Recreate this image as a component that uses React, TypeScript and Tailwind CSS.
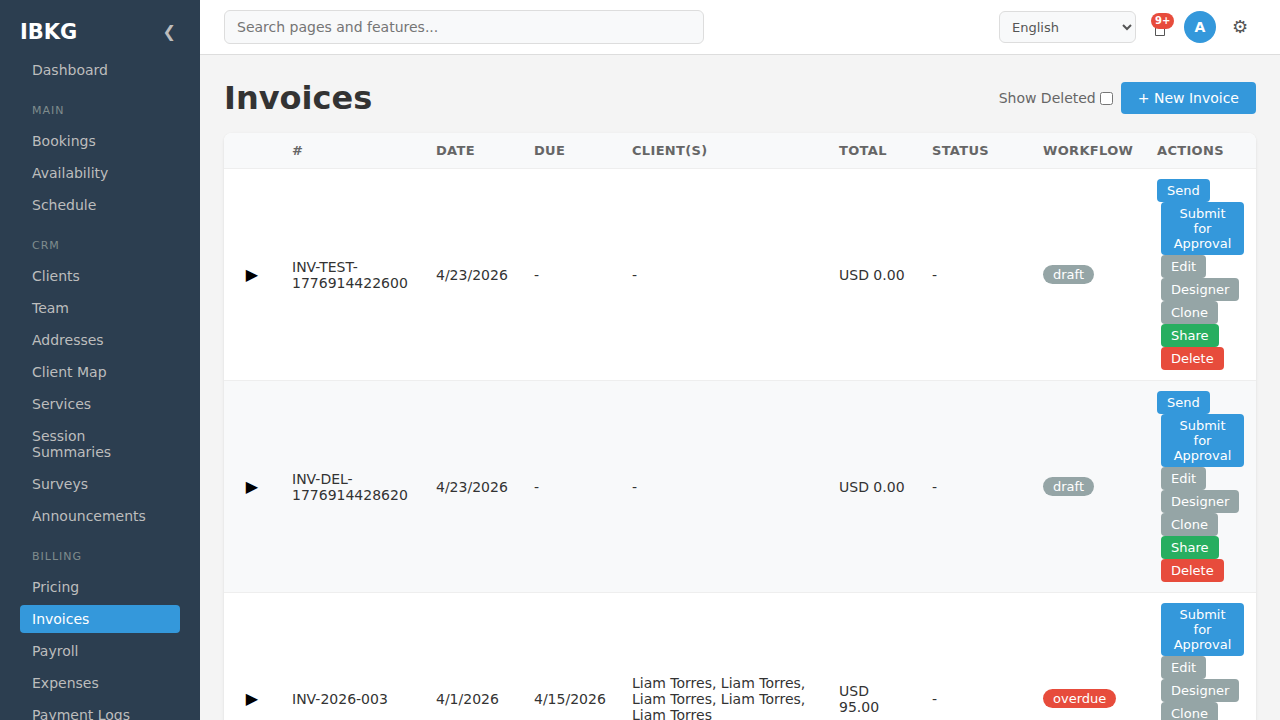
import { useState } from "react";

const navGroups = [
  { title: "", items: ["Dashboard"] },
  { title: "Main", items: ["Bookings", "Availability", "Schedule"] },
  {
    title: "CRM",
    items: ["Clients", "Team", "Addresses", "Client Map", "Services", "Session Summaries", "Surveys", "Announcements"],
  },
  { title: "Billing", items: ["Pricing", "Invoices", "Payroll", "Expenses", "Payment Logs"] },
];

const invoices = [
  {
    number: "INV-TEST-1776914422600",
    date: "4/23/2026",
    due: "-",
    clients: "-",
    total: "USD 0.00",
    status: "-",
    workflow: "draft",
    actions: ["Send", "Submit for Approval", "Edit", "Designer", "Clone", "Share", "Delete"],
  },
  {
    number: "INV-DEL-1776914428620",
    date: "4/23/2026",
    due: "-",
    clients: "-",
    total: "USD 0.00",
    status: "-",
    workflow: "draft",
    actions: ["Send", "Submit for Approval", "Edit", "Designer", "Clone", "Share", "Delete"],
  },
  {
    number: "INV-2026-003",
    date: "4/1/2026",
    due: "4/15/2026",
    clients: "Liam Torres, Liam Torres, Liam Torres, Liam Torres, Liam Torres",
    total: "USD 95.00",
    status: "-",
    workflow: "overdue",
    actions: ["Submit for Approval", "Edit", "Designer", "Clone", "Share", "Void", "Delete"],
  },
];

const actionColors: Record<string, string> = {
  Send: "bg-[#3498db]",
  "Submit for Approval": "ml-1 bg-[#3498db]",
  Edit: "ml-1 bg-[#95a5a6]",
  Designer: "ml-1 bg-[#95a5a6]",
  Clone: "ml-1 bg-[#95a5a6]",
  Share: "ml-1 bg-[#27ae60]",
  Void: "ml-1 bg-[#95a5a6]",
  Delete: "ml-1 bg-[#e74c3c]",
};

const workflowColors: Record<string, string> = {
  draft: "bg-[#95a5a6]",
  overdue: "bg-[#e74c3c]",
};

const columns = [
  { label: "", width: "w-[56px]" },
  { label: "#", width: "w-[144px]" },
  { label: "Date", width: "w-[98px]" },
  { label: "Due", width: "w-[98px]" },
  { label: "Client(s)", width: "" },
  { label: "Total", width: "w-[93px]" },
  { label: "Status", width: "w-[111px]" },
  { label: "Workflow", width: "w-[114px]" },
  { label: "Actions", width: "w-[111px]" },
];

function Sidebar() {
  return (
    <aside className="w-[200px] shrink-0 overflow-y-auto bg-[#2c3e50] p-5 text-[#bdbdbd] [scrollbar-width:none]">
      <div className="flex h-6 items-center justify-between">
        <span className="text-[21px] leading-[25px] font-bold text-white">IBKG</span>
        <button type="button" aria-label="Collapse sidebar" className="px-1 text-base">
          ❮
        </button>
      </div>
      <nav className="mt-3 text-[14px] leading-4">
        {navGroups.map((group) => (
          <div key={group.title}>
            {group.title && (
              <div className="mt-5 mb-[10px] px-3 text-[11px] leading-[13px] tracking-[1px] text-[#7f8c8d] uppercase">
                {group.title}
              </div>
            )}
            <div className="flex flex-col gap-1">
              {group.items.map((item) => (
                <a
                  key={item}
                  href="#"
                  className={
                    item === "Invoices"
                      ? "rounded bg-[#3498db] px-3 py-1.5 text-white"
                      : "rounded px-3 py-1.5"
                  }
                >
                  {item}
                </a>
              ))}
            </div>
          </div>
        ))}
      </nav>
    </aside>
  );
}

function TopBar() {
  return (
    <header className="flex h-[55px] shrink-0 items-center justify-between border-b border-[#ddd] bg-white px-6">
      <input
        type="search"
        aria-label="Search"
        placeholder="Search pages and features..."
        className="h-[34px] w-[480px] rounded-md border border-[#ddd] bg-[#f8f9fa] px-3 text-[14px] placeholder:text-[#757575]"
      />
      <div className="flex items-center gap-2">
        <select
          aria-label="Language"
          className="h-8 w-[137px] rounded-md border border-[#ddd] bg-[#f8f9fa] px-2 text-[13px] text-[#555]"
        >
          <option>English</option>
        </select>
        <button
          type="button"
          aria-label="Notifications"
          className="relative flex h-8 w-8 items-center justify-center text-[#555]"
        >
          <svg width="10" height="18" viewBox="0 0 10 18" fill="none" stroke="currentColor">
            <path d="M0.5 0.5h9v17h-9z" />
          </svg>
          <span className="absolute top-[2px] left-[7px] rounded-lg bg-[#e74c3c] px-1 text-[10px] leading-4 font-bold text-white">
            9+
          </span>
        </button>
        <button type="button" className="h-8 w-8 rounded-full bg-[#3498db] text-[14px] font-bold text-white">
          A
        </button>
        <button type="button" aria-label="Settings" className="h-8 w-8 text-[18px] leading-[30px] text-[#555]">
          ⚙
        </button>
      </div>
    </header>
  );
}

function InvoiceTable() {
  return (
    <table className="w-full table-fixed overflow-hidden rounded-lg bg-white text-left text-[14px] leading-4 text-[#333] shadow-[0_1px_3px_rgba(0,0,0,0.1)]">
      <thead>
        <tr className="border-b border-[#eee] bg-[#f8f9fa] text-[13px] leading-[15px] tracking-wide text-[#666] uppercase">
          {columns.map((col) => (
            <th key={col.label} className={`px-3 py-[10px] font-bold ${col.width}`}>
              {col.label}
            </th>
          ))}
        </tr>
      </thead>
      <tbody>
        {invoices.map((inv) => (
          <tr key={inv.number} className="border-b border-[#eee] even:bg-[#f8f9fa]">
            <td className="px-3 py-[10px] text-center">
              <button type="button" aria-label="Expand invoice" className="text-base text-black">
                ▶
              </button>
            </td>
            <td className="px-3 py-[10px]">{inv.number}</td>
            <td className="px-3 py-[10px]">{inv.date}</td>
            <td className="px-3 py-[10px]">{inv.due}</td>
            <td className="px-3 py-[10px]">{inv.clients}</td>
            <td className="px-3 py-[10px]">{inv.total}</td>
            <td className="px-3 py-[10px]">{inv.status}</td>
            <td className="px-3 py-[10px]">
              <span
                className={`inline-block rounded-[10px] px-[10px] py-[2px] text-[13px] leading-[15px] text-white ${workflowColors[inv.workflow]}`}
              >
                {inv.workflow}
              </span>
            </td>
            <td className="px-3 py-[10px]">
              <div className="flex flex-col items-start">
                {inv.actions.map((action) => (
                  <button
                    key={action}
                    type="button"
                    className={`rounded px-[10px] py-1 text-[13px] leading-[15px] text-white ${actionColors[action]}`}
                  >
                    {action}
                  </button>
                ))}
              </div>
            </td>
          </tr>
        ))}
      </tbody>
    </table>
  );
}

export default function App() {
  const [showDeleted, setShowDeleted] = useState(false);

  return (
    <div className="flex h-screen bg-[#f4f4f4] font-['DejaVu_Sans',sans-serif]">
      <Sidebar />
      <div className="flex min-w-0 flex-1 flex-col">
        <TopBar />
        <main className="flex-1 overflow-y-auto p-6 [scrollbar-width:none]">
          <div className="mb-4 flex items-center justify-between">
            <h1 className="text-[32px] leading-[38px] font-bold text-[#333]">Invoices</h1>
            <div className="flex items-center gap-2">
              <label className="flex items-center gap-1 text-[14px] text-[#666]">
                Show Deleted
                <input
                  type="checkbox"
                  checked={showDeleted}
                  onChange={(e) => setShowDeleted(e.target.checked)}
                  className="h-[13px] w-[13px]"
                />
              </label>
              <button type="button" className="h-8 rounded bg-[#3498db] px-[17px] text-[14px] text-white">
                + New Invoice
              </button>
            </div>
          </div>
          <InvoiceTable />
        </main>
      </div>
    </div>
  );
}
